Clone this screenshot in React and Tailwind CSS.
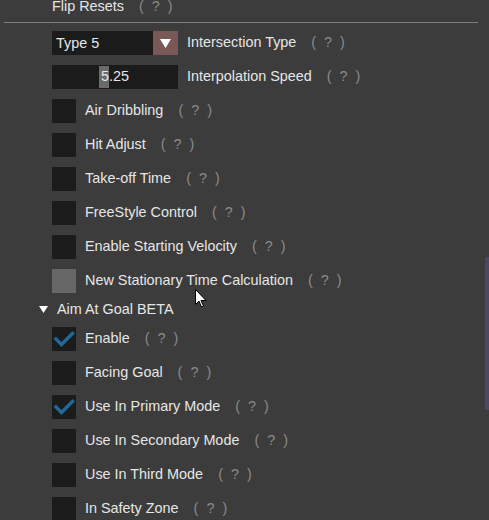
import React from "react"

const font = { fontFamily: '"Liberation Sans", Arial, sans-serif' }

function Help() {
    return <span className="ml-[15px] text-[#8a8a8a] whitespace-pre">(  ?  )</span>
}

function CheckRow({ label, checked, hovered }) {
    return (
        <div className="flex items-center h-6 shrink-0">
            <div className={`w-6 h-6 flex items-center justify-center ${hovered ? "bg-[#676767]" : "bg-[#1b1b1b]"}`}>
                {checked && (
                    <svg width="24" height="24" viewBox="0 0 24 24">
                        <path d="M4 12 L9.5 17.5 L20.5 6.5" fill="none" stroke="#1d6a98" strokeWidth="3.4" strokeLinecap="square" />
                    </svg>
                )}
            </div>
            <span className="ml-[9px]">{label}</span>
            <Help />
        </div>
    )
}

export default function App() {
    return (
        <div className="relative w-[489px] h-[520px] overflow-hidden bg-[#3c3c3c] text-[#e6e6e6] text-[14.4px] flex items-start" style={font}>
            {/* 主体 */}
            <div className="flex-1 flex flex-col">
                <div className="pl-[52px] h-[13px] leading-[13px] flex shrink-0">
                    <span>Flip Resets</span>
                    <Help />
                </div>
                <div className="ml-[4px] w-[474px] h-px bg-[#7d7d7d] mt-[9px] shrink-0" />

                {/* 下拉框 */}
                <div className="pl-[52px] mt-[8px] flex items-center h-6 shrink-0">
                    <div className="w-[126px] h-6 flex bg-[#1b1b1b]">
                        <span className="flex-1 pl-[4px] leading-6">Type 5</span>
                        <div className="w-[25px] h-6 bg-[#7a5858] flex items-center justify-center">
                            <svg width="11" height="9" viewBox="0 0 11 9">
                                <path d="M0 0 H11 L5.5 9 Z" fill="#ffffff" />
                            </svg>
                        </div>
                    </div>
                    <span className="ml-[9px]">Intersection Type</span>
                    <Help />
                </div>

                {/* 滑块 */}
                <div className="pl-[52px] mt-[10px] flex items-center h-6 shrink-0">
                    <div className="relative w-[126px] h-6 bg-[#1b1b1b] flex items-center justify-center">
                        <div className="absolute left-[47px] top-[1px] w-[10px] h-[22px] bg-[#6b6b6b]" />
                        <span className="relative">5.25</span>
                    </div>
                    <span className="ml-[9px]">Interpolation Speed</span>
                    <Help />
                </div>

                <div className="pl-[52px] mt-[10px] flex flex-col gap-[10px] shrink-0">
                    <CheckRow label="Air Dribbling" />
                    <CheckRow label="Hit Adjust" />
                    <CheckRow label="Take-off Time" />
                    <CheckRow label="FreeStyle Control" />
                    <CheckRow label="Enable Starting Velocity" />
                    <CheckRow label="New Stationary Time Calculation" hovered />
                </div>

                {/* 分组标题 */}
                <div className="h-[34px] flex items-center pl-[39px] shrink-0">
                    <svg width="9" height="8" viewBox="0 0 9 8">
                        <path d="M0 0 H9 L4.5 7 Z" fill="#ffffff" />
                    </svg>
                    <span className="ml-[9px]">Aim At Goal BETA</span>
                </div>

                <div className="pl-[52px] flex flex-col gap-[10px] shrink-0">
                    <CheckRow label="Enable" checked />
                    <CheckRow label="Facing Goal" />
                    <CheckRow label="Use In Primary Mode" checked />
                    <CheckRow label="Use In Secondary Mode" />
                    <CheckRow label="Use In Third Mode" />
                    <CheckRow label="In Safety Zone" />
                </div>
            </div>

            {/* 滚动条 */}
            <div className="w-[4px] shrink-0">
                <div className="mt-[257px] h-[153px] rounded-l-[2px] bg-[#4b4867]" />
            </div>

            {/* 鼠标指针 */}
            <svg className="absolute left-[195px] top-[289px]" width="13" height="20" viewBox="0 0 13 20">
                <path d="M0.5 0.5 V15.5 L4 12 L6.5 18 L8.5 17 L6 11.5 H11 Z" fill="#ffffff" stroke="#000000" strokeWidth="1" />
            </svg>
        </div>
    )
}
